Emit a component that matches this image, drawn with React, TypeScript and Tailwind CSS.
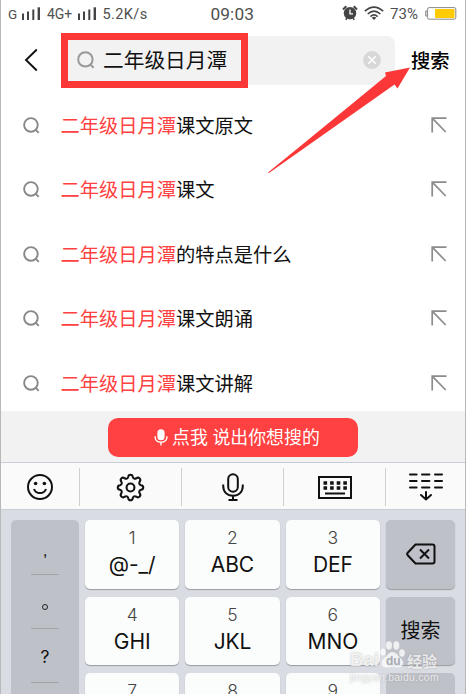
import React from 'react';

const keyword = '二年级日月潭';

const suggestions = ['课文原文', '课文', '的特点是什么', '课文朗诵', '课文讲解'];

const keys = [
  { digit: '1', label: '@-_/' },
  { digit: '2', label: 'ABC' },
  { digit: '3', label: 'DEF' },
  { digit: '4', label: 'GHI' },
  { digit: '5', label: 'JKL' },
  { digit: '6', label: 'MNO' },
  { digit: '7' },
  { digit: '8' },
  { digit: '9' },
];

const SearchIcon = ({ className }: { className: string }) => (
  <svg className={className} viewBox="0 0 18 18" fill="none" stroke="currentColor" strokeWidth="2">
    <circle cx="8.4" cy="8.4" r="7.2" />
    <path d="M13.4 13.4 16.6 16.8" />
  </svg>
);

const Signal = () => (
  <svg className="mb-px h-[14px] w-[19px]" viewBox="0 0 19 14" fill="#444">
    <rect x="0" y="6.5" width="2" height="6.5" />
    <rect x="5" y="4.5" width="2" height="8.5" />
    <rect x="10.3" y="2.5" width="2" height="10.5" />
    <rect x="15.6" y="0.3" width="2.4" height="12.7" />
  </svg>
);

const StatusBar = () => (
  <div className="flex h-7 shrink-0 items-center whitespace-nowrap pl-[7px] font-['Roboto','Noto_Sans',sans-serif] text-[14px] leading-7 text-[#505050]">
    <span className="w-[14px] text-[13.5px]">G</span>
    <Signal />
    <span className="ml-[6px] w-[30.5px] text-[14px] tracking-[-0.1px]">4G+</span>
    <Signal />
    <span className="ml-[6px] w-[108px] pt-px text-[14.5px] tracking-[0.4px]">5.2K/s</span>
    <span className="w-[131.5px] text-[17.3px] tracking-[0.1px]">09:03</span>
    <svg className="mb-[2px] h-4 w-4" viewBox="0 0 16 16">
      <path d="M1 4.5 4.3 1.2M11.7 1.2 15 4.5" stroke="#444" strokeWidth="2" />
      <circle cx="8" cy="8.2" r="6.2" fill="#444" />
      <path d="M3.8 14.8 5 12.8M12.2 14.8 11 12.8" stroke="#444" strokeWidth="1.6" />
      <path d="M8 4.5V8.8H11" fill="none" stroke="#fff" strokeWidth="1.3" />
    </svg>
    <svg className="ml-[6px] mb-[2px] h-[14px] w-[20px]" viewBox="0 0 20 14" fill="none" stroke="#444" strokeWidth="1.6">
      <path d="M0.8 5.1Q10-3 19.2 5.1" />
      <path d="M3.7 8Q10 2.2 16.3 8" />
      <path d="M6.4 10.6Q10 7.2 13.6 10.6" />
      <path d="M7.7 11.7Q10 10 12.3 11.7L10 14Z" fill="#444" stroke="none" />
    </svg>
    <span className="ml-[6px] w-[35px] text-[15px] tracking-[0.1px]">73%</span>
    <svg className="mb-[2px] h-[13px] w-[32px]" viewBox="0 0 32 13">
      <path d="M2 4H0.8V9H2" fill="none" stroke="#777" />
      <rect x="2.6" y="0.6" width="28.2" height="11.6" rx="1.5" fill="#fff" stroke="#888" />
      <rect x="10" y="2" width="19.5" height="9" fill="#ffcb05" />
    </svg>
  </div>
);

const SearchBar = () => (
  <div className="flex h-[65px] shrink-0 items-start pl-[22px]">
    <svg className="mt-5 h-6 w-4" viewBox="0 0 16 24" fill="none" stroke="#111" strokeWidth="1.9">
      <path d="M13.8 1.5 3 12 13.8 22.5" />
    </svg>
    <div className="relative ml-[25px] mt-2 flex h-[49px] w-[331px] items-center rounded-lg bg-[#f2f2f2] pl-[13px]">
      <div className="absolute left-[-3px] top-[-3px] h-[55px] w-[187px] border-[7px] border-[#fb3737]" />
      <SearchIcon className="mb-px h-[18px] w-[18px] text-[#999]" />
      <span className="ml-[8px] text-[20.7px] leading-none text-[#111]">{keyword}</span>
      <svg className="mb-px ml-auto mr-[14px] h-[18px] w-[18px]" viewBox="0 0 18 18">
        <circle cx="9" cy="9" r="9" fill="#d8d8d8" />
        <path d="M5.3 5.3 12.7 12.7M12.7 5.3 5.3 12.7" stroke="#fff" strokeWidth="1.5" />
      </svg>
    </div>
    <span className="ml-[16px] mt-[19px] text-[19.3px] font-medium leading-7 text-black">搜索</span>
  </div>
);

const Suggestions = () => (
  <div className="h-[318px] shrink-0 overflow-hidden">
    {suggestions.map((rest, index) => (
      <div key={index} className="flex h-[64.5px] items-center pl-[21.5px] pr-[18px]">
        <SearchIcon className="h-[17px] w-[17px] text-[#888]" />
        <span className="ml-[21px] text-[19.25px] leading-none text-[#111]">
          <span className="text-[#ff4141]">{keyword}</span>
          {rest}
        </span>
        <svg className="mb-px ml-auto h-4 w-4" viewBox="0 0 16 16" fill="none" stroke="#8c8c8c" strokeWidth="1.7">
          <path d="M1.2 15.5V1.2H15.5M1.2 1.2 14.7 15" />
        </svg>
      </div>
    ))}
  </div>
);

const VoiceBar = () => (
  <div className="flex h-[51px] shrink-0 justify-center bg-[#f2f2f2] pt-[7px]">
    <button className="flex h-[39px] w-[250px] items-center rounded-[10px] bg-[#ff4141] pl-[46px] text-[17.9px] text-white">
      <svg className="mr-1 h-[17px] w-[14px]" viewBox="0 0 14 17" fill="none" stroke="#fff" strokeWidth="1.4">
        <rect x="3.4" y="0.3" width="7.2" height="11" rx="3.6" fill="#fff" stroke="none" />
        <path d="M1 7.2C1 11 3.3 13.2 7 13.2S13 11 13 7.2M7 13V16.5" />
      </svg>
      <span className="pt-px leading-none">点我 说出你想搜的</span>
    </button>
  </div>
);

const Toolbar = () => (
  <div className="grid h-12 shrink-0 grid-cols-[78px_102px_102px_102px_1fr] border-y-[1.5px] border-[#c9cdd5] bg-[#fafafa] pb-[3px] pt-[5px] text-[#111] [&>div]:flex [&>div]:items-center [&>div]:justify-center [&>div+div]:border-l [&>div+div]:border-[#cfd0d2]">
    <div>
      <svg className="h-7 w-7" viewBox="0 0 28 28" fill="none" stroke="currentColor" strokeWidth="2">
        <circle cx="14" cy="14" r="12" />
        <circle cx="9.6" cy="10.5" r="1.8" fill="currentColor" stroke="none" />
        <circle cx="18.4" cy="10.5" r="1.8" fill="currentColor" stroke="none" />
        <path d="M8 16C9.8 21.4 18.2 21.4 20 16" />
      </svg>
    </div>
    <div>
      <svg className="h-[29px] w-[29px]" viewBox="0 0 28 28" fill="none" stroke="currentColor" strokeWidth="2" strokeLinejoin="round">
        <path d="M11.8 3.8C12.1 1 15.9 1 16.2 3.8C16.5 5.5 18 6 19.7 5.1C22 3.4 24.6 6 22.9 8.3C22 10 22.5 11.5 24.2 11.8C27 12.1 27 15.9 24.2 16.2C22.5 16.5 22 18 22.9 19.7C24.6 22 22 24.6 19.7 22.9C18 22 16.5 22.5 16.2 24.2C15.9 27 12.1 27 11.8 24.2C11.5 22.5 10 22 8.3 22.9C6 24.6 3.4 22 5.1 19.7C6 18 5.5 16.5 3.8 16.2C1 15.9 1 12.1 3.8 11.8C5.5 11.5 6 10 5.1 8.3C3.4 6 6 3.4 8.3 5.1C10 6 11.5 5.5 11.8 3.8Z" />
        <circle cx="14" cy="14" r="3.8" />
      </svg>
    </div>
    <div>
      <svg className="h-7 w-6" viewBox="0 0 24 28" fill="none" stroke="currentColor" strokeWidth="2">
        <rect x="7.2" y="1.2" width="9.6" height="17.6" rx="4.8" />
        <path d="M2.2 11.5V13C2.2 19 6.2 22.7 12 22.7S21.8 19 21.8 13V11.5M12 22.7V27M7.5 27H16.5" />
      </svg>
    </div>
    <div>
      <svg className="h-[23px] w-[34px]" viewBox="0 0 34 23" fill="none" stroke="currentColor">
        <rect x="1" y="1" width="32" height="21" strokeWidth="2" />
        <path d="M5.5 7H29M5.5 12H29" strokeWidth="3.4" strokeDasharray="3.6 3" />
        <path d="M7 17.5H27" strokeWidth="2" />
      </svg>
    </div>
    <div>
      <svg className="h-7 w-9" viewBox="0 0 36 28" fill="none" stroke="currentColor" strokeWidth="2" strokeLinecap="round">
        <path d="M2 1.5H8.6M14 1.5H21.4M27 1.5H34M2 8H8.6M14 8H21.4M27 8H34M2 14.5H8.6M14 14.5H21.4M27 14.5H34" />
        <path d="M18 19V26.5M13 22 18 26.5 23 22" />
      </svg>
    </div>
  </div>
);

const Keyboard = () => (
  <div className="grid h-[184px] shrink-0 grid-cols-[68px_1fr_69px] gap-[6px] overflow-hidden bg-[#d9dce2] pl-[10px] pr-[10px] pt-[10px] text-[#111]">
    <div className="flex h-[300px] flex-col items-center rounded-[5px] bg-[#bfc1c9]">
      <div className="flex h-[55px] w-7 justify-center border-b border-[#a3a4a9] pt-[22px] font-['Liberation_Sans',sans-serif] text-[17px] leading-none">
        ,
      </div>
      <div className="flex h-[54px] w-7 items-center justify-center border-b border-[#a3a4a9]">
        <span className="mt-[11px] h-[6px] w-[6px] rounded-full border-[1.3px] border-[#222]" />
      </div>
      <div className="flex h-[54px] w-7 items-center justify-center border-b border-[#a3a4a9] pt-[2px] font-['Inter',sans-serif] text-[17.5px] leading-none">
        ?
      </div>
    </div>
    <div className="grid h-[222px] grid-cols-3 grid-rows-3 gap-x-[6px] gap-y-[8px] font-['Inter','Noto_Sans',sans-serif]">
      {keys.map((key) => (
        <div
          key={key.digit}
          className="flex flex-col items-center rounded-[5px] bg-[#fbfdfc] pt-[8px] shadow-[0_1px_1px_#9a9ca2]"
        >
          <span className="text-[17.5px] font-light leading-[20px] text-[#444]">{key.digit}</span>
          {key.label && <span className="mt-[4px] text-[21px] leading-[26px] tracking-[-0.1px]">{key.label}</span>}
        </div>
      ))}
    </div>
    <div className="grid h-[222px] grid-rows-3 gap-[8px]">
      <div className="flex items-center justify-center rounded-[5px] bg-[#bfc1c9] shadow-[0_1px_1px_#9a9ca2]">
        <svg className="h-[22px] w-[30px]" viewBox="0 0 30 22" fill="none" stroke="currentColor" strokeWidth="2" strokeLinejoin="round">
          <path d="M9.5 1.5H26.5Q28.5 1.5 28.5 3.5V18.5Q28.5 20.5 26.5 20.5H9.5L1.5 12Q0.8 11 1.5 10Z" />
          <path d="M14 6.5 23 15.5M23 6.5 14 15.5" />
        </svg>
      </div>
      <div className="flex items-center justify-center rounded-[5px] bg-[#bfc1c9] text-[20px] shadow-[0_1px_1px_#9a9ca2]">
        搜索
      </div>
      <div className="rounded-[5px] bg-[#bfc1c9]" />
    </div>
  </div>
);

const Watermark = () => (
  <div className="absolute left-[350px] top-[641px] w-[95px] text-white/75 [text-shadow:0_0_2px_#8889]">
    <div className="flex h-[27px] items-end whitespace-nowrap font-['Liberation_Sans',sans-serif] font-bold leading-none">
      <span className="mb-[-1px] w-[30px] text-[18.5px]">Bai</span>
      <div className="relative h-[27px] w-[25px]">
        <svg className="h-full w-full" viewBox="0 0 25 27" fill="currentColor">
          <ellipse cx="3" cy="11" rx="2.8" ry="3.6" />
          <ellipse cx="9" cy="4.5" rx="3" ry="4.2" />
          <ellipse cx="16.3" cy="4.5" rx="3" ry="4.2" />
          <ellipse cx="22" cy="12" rx="2.8" ry="3.8" />
          <path d="M12.5 11C17 11 17.5 15 21 17.5C25 21 23 27 18 26.5Q12.5 25.5 7 26.5C1 27 0 21 4 17.5C7.5 15 8 11 12.5 11Z" />
        </svg>
        <span className="absolute left-[6px] top-[14px] text-[12px] text-[#a9abb3] [text-shadow:none]">du</span>
      </div>
      <span className="ml-[2px] font-['Noto_Sans_CJK_SC',sans-serif] text-[15px]">经验</span>
    </div>
    <div className="mt-[3px] font-['Liberation_Sans',sans-serif] text-[10.5px] leading-[12px] tracking-[0.25px]">
      jingyan.baidu.com
    </div>
  </div>
);

const App = () => {
  return (
    <div className="relative h-[694px] w-[467px] overflow-hidden bg-white font-['Noto_Sans','Noto_Sans_CJK_SC',sans-serif]">
      <div className="flex h-full w-[466px] flex-col border-x border-[#b8b8b8]">
        <StatusBar />
        <SearchBar />
        <Suggestions />
        <VoiceBar />
        <Toolbar />
        <Keyboard />
      </div>
      <svg className="absolute left-[268px] top-[66px] h-[108px] w-[144px]" viewBox="268 66 144 108" fill="#fb3737">
        <path d="M268 172.5Q330 122 386 76L385 72.5 410 67.5 397.5 88.5 394.5 84.5 269 173Z" />
      </svg>
      <Watermark />
    </div>
  );
};

export default App;
